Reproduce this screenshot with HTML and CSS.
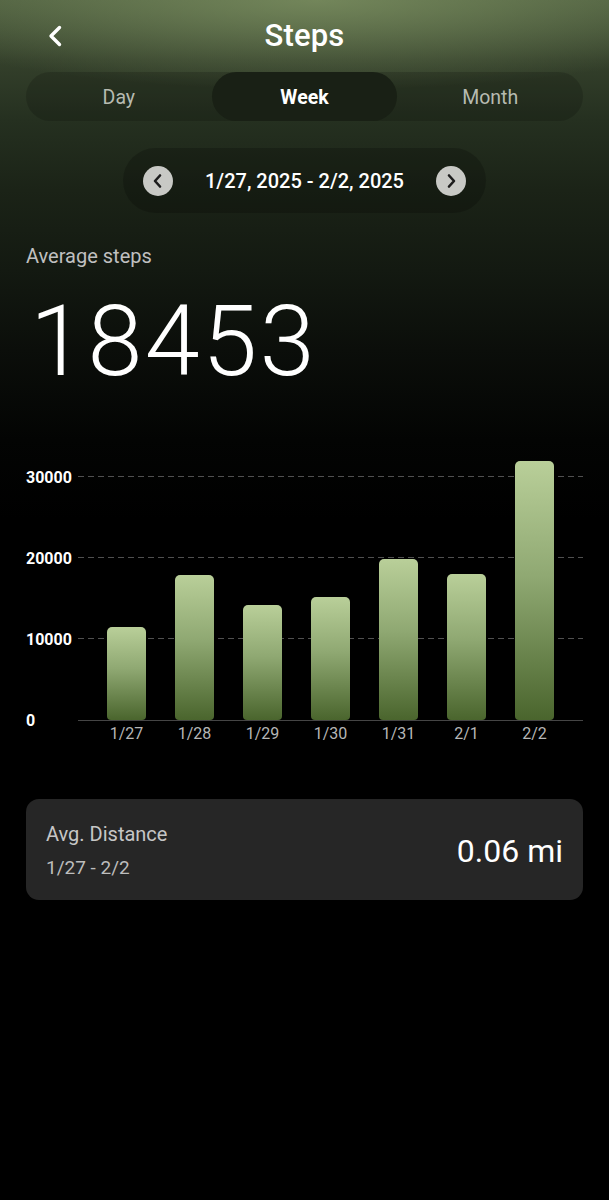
FILE: index.html
```html
<!DOCTYPE html>
<html lang="en">
<head>
<meta charset="utf-8">
<title>Steps</title>
<link rel="stylesheet" href="styles.css">
</head>
<body>
<div class="screen">
  <header class="topbar">
    <button class="back" aria-label="Back">
      <svg width="16" height="22" viewBox="0 0 16 22"><path d="M12.5 2.5 L4 11 L12.5 19.5" fill="none" stroke="#fff" stroke-width="3.4" stroke-linecap="round" stroke-linejoin="round"/></svg>
    </button>
    <h1 class="title">Steps</h1>
    <span></span>
  </header>

  <nav class="seg">
    <span class="seg-item">Day</span>
    <span class="seg-item active">Week</span>
    <span class="seg-item">Month</span>
  </nav>

  <div class="range">
    <button class="circ" aria-label="Previous">
      <svg width="30" height="30" viewBox="0 0 30 30"><path d="M17 9.5 L12 15 L17 20.5" fill="none" stroke="#1c1c1c" stroke-width="2.6" stroke-linecap="round" stroke-linejoin="round"/></svg>
    </button>
    <span class="range-text">1/27, 2025 - 2/2, 2025</span>
    <button class="circ" aria-label="Next">
      <svg width="30" height="30" viewBox="0 0 30 30"><path d="M13 9.5 L18 15 L13 20.5" fill="none" stroke="#1c1c1c" stroke-width="2.6" stroke-linecap="round" stroke-linejoin="round"/></svg>
    </button>
  </div>

  <section class="summary">
    <div class="summary-label">Average steps</div>
    <div class="summary-value">18453</div>
  </section>

  <section class="chart">
    <div class="yaxis">
      <span class="ytick" style="bottom:243px">30000</span>
      <span class="ytick" style="bottom:162px">20000</span>
      <span class="ytick" style="bottom:81px">10000</span>
      <span class="ytick" style="bottom:0px">0</span>
    </div>
    <div class="plot">
      <div class="gridline" style="bottom:243px"></div>
      <div class="gridline" style="bottom:162px"></div>
      <div class="gridline" style="bottom:81px"></div>
      <div class="bars">
        <div class="col"><div class="bar" style="height:93px"></div></div>
        <div class="col"><div class="bar" style="height:145px"></div></div>
        <div class="col"><div class="bar" style="height:115px"></div></div>
        <div class="col"><div class="bar" style="height:123px"></div></div>
        <div class="col"><div class="bar" style="height:161px"></div></div>
        <div class="col"><div class="bar" style="height:146px"></div></div>
        <div class="col"><div class="bar" style="height:259px"></div></div>
      </div>
    </div>
    <div></div>
    <div class="xlabels">
      <span>1/27</span><span>1/28</span><span>1/29</span><span>1/30</span><span>1/31</span><span>2/1</span><span>2/2</span>
    </div>
  </section>

  <section class="card">
    <div class="card-left">
      <div class="card-title">Avg. Distance</div>
      <div class="card-sub">1/27 - 2/2</div>
    </div>
    <div class="card-value">0.06 mi</div>
  </section>
</div>
</body>
</html>
```

FILE: styles.css
```css
* { box-sizing: border-box; }

html, body {
  margin: 0;
  padding: 0;
  background: #000;
}

body {
  font-family: Roboto, "Noto Sans", "Liberation Sans", sans-serif;
  color: #fff;
}

.screen {
  width: 609px;
  min-height: 1200px;
  background:
    radial-gradient(ellipse 75% 90px at 52% 0%, rgba(128, 148, 100, 0.75), rgba(128, 148, 100, 0) 100%),
    linear-gradient(180deg, #4b5b3d 0px, #34402b 60px, #253020 120px, #1b2317 190px, #131911 270px, #0b0e0a 350px, #030403 440px, #000 520px);
  overflow: hidden;
}

/* Header */
.topbar {
  height: 72px;
  display: grid;
  grid-template-columns: 1fr auto 1fr;
  align-items: center;
}

.back {
  justify-self: start;
  margin-left: 47px;
  padding: 0;
  border: 0;
  background: none;
  display: flex;
  align-items: center;
}

.title {
  margin: 0;
  font-size: 31px;
  line-height: 36px;
  font-weight: 500;
  letter-spacing: 0.2px;
}

/* Segmented control */
.seg {
  margin: 0 26px;
  height: 49px;
  border-radius: 25px;
  background: rgba(0, 0, 0, 0.16);
  display: grid;
  grid-template-columns: 1fr 1fr 1fr;
}

.seg-item {
  display: flex;
  align-items: center;
  justify-content: center;
  padding-top: 1px;
  border-radius: 25px;
  font-size: 19.5px;
  color: #b7bbb1;
}

.seg-item.active {
  background: #192015;
  color: #fff;
  font-weight: 700;
}

/* Date range */
.range {
  margin: 27px auto 0;
  width: 363px;
  height: 65px;
  border-radius: 33px;
  background: rgba(0, 0, 0, 0.2);
  display: flex;
  align-items: center;
  justify-content: center;
  gap: 32px;
}

.circ {
  width: 30px;
  height: 30px;
  padding: 0;
  border: 0;
  border-radius: 50%;
  background: #c8c9c5;
  display: flex;
  align-items: center;
  justify-content: center;
}

.range-text {
  font-size: 20px;
  font-weight: 500;
  white-space: nowrap;
}

/* Summary */
.summary {
  padding: 0 26px;
  margin-top: 31px;
}

.summary-label {
  font-size: 20px;
  line-height: 24px;
  color: #c0c0c0;
}

.summary-value {
  margin-top: 24px;
  margin-left: 4px;
  font-size: 99px;
  line-height: 98px;
  font-weight: 300;
  letter-spacing: 2.5px;
}

/* Chart */
.chart {
  margin: 50px 26px 0;
  display: grid;
  grid-template-columns: 52px 1fr;
  grid-template-rows: 281px auto;
}

.yaxis {
  position: relative;
}

.ytick {
  position: absolute;
  left: 0;
  transform: translateY(50%);
  font-size: 16px;
  line-height: 20px;
  font-weight: 700;
  color: #fff;
}

.plot {
  position: relative;
  border-bottom: 1px solid #454545;
}

.gridline {
  position: absolute;
  left: 0;
  right: 0;
  height: 1px;
  background: repeating-linear-gradient(90deg, #505050 0 6px, transparent 6px 10px);
}

.bars {
  position: relative;
  height: 100%;
  padding: 0 14.5px;
  display: flex;
  align-items: flex-end;
}

.col {
  flex: 1;
  display: flex;
  justify-content: center;
  align-items: flex-end;
  height: 100%;
}

.bar {
  width: 39px;
  border-radius: 5px 5px 4px 4px;
  background: linear-gradient(180deg, #b9cf99 0%, #8fa872 45%, #4a652d 100%);
}

.xlabels {
  padding: 3px 14.5px 0;
  display: flex;
}

.xlabels span {
  flex: 1;
  text-align: center;
  font-size: 16px;
  line-height: 20px;
  color: #b6b6b6;
}

/* Card */
.card {
  margin: 55px 26px 0;
  height: 101px;
  border-radius: 13px;
  background: #262626;
  padding: 2px 20px 0 20px;
  display: flex;
  align-items: center;
  justify-content: space-between;
}

.card-title {
  font-size: 20px;
  line-height: 24px;
  color: #c6c6c6;
}

.card-sub {
  margin-top: 10px;
  font-size: 19px;
  line-height: 24px;
  color: #bdbdbd;
}

.card-value {
  font-size: 32px;
  line-height: 38px;
  color: #fff;
}
```
